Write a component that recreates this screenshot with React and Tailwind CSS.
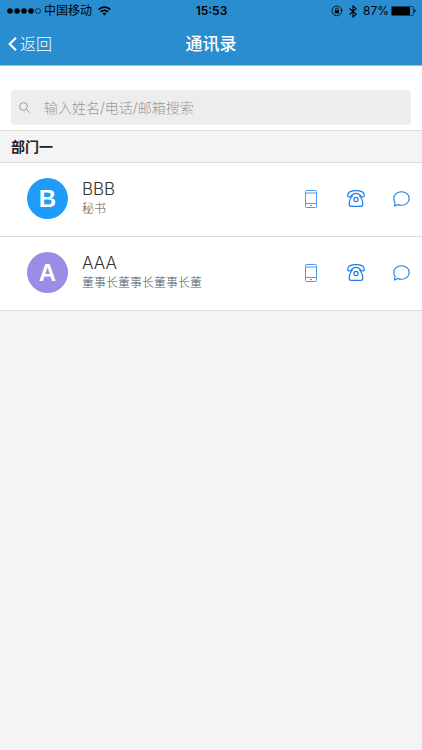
import { useState } from 'react';

const contactos = [
  { id: 1, nombre: 'BBB', inicial: 'B', cargo: '秘书', color: 'bg-[#1f9bfa]' },
  { id: 2, nombre: 'AAA', inicial: 'A', cargo: '董事长董事长董事长董', color: 'bg-[#9b8de5]' }
];

function StatusBar() {
  return (
    <div className="grid grid-cols-3 items-center h-[22px] pl-[7px] pr-[6px] text-black text-xs leading-4">
      <div className="flex items-center gap-[3px] whitespace-nowrap">
        <svg className="w-[34px] h-[6px]" viewBox="0 0 34 6">
          <circle cx="3" cy="3" r="2.8" />
          <circle cx="10" cy="3" r="2.8" />
          <circle cx="17" cy="3" r="2.8" />
          <circle cx="24" cy="3" r="2.8" />
          <circle cx="31" cy="3" r="2.5" fill="none" stroke="#000" strokeWidth="0.6" />
        </svg>
        <span>中国移动</span>
        <svg className="w-[13px] h-[10px] ml-[3px]" viewBox="0 0 13 10" fill="none" stroke="#000" strokeWidth="1.7">
          <path d="M0.7 3.6a8.2 8.2 0 0 1 11.6 0" />
          <path d="M2.8 5.9a5.2 5.2 0 0 1 7.4 0" />
          <path d="M6.5 9.6L4.5 7.5a2.9 2.9 0 0 1 4 0z" fill="#000" stroke="none" />
        </svg>
      </div>
      <span className="text-center font-semibold">15:53</span>
      <div className="flex items-center justify-end">
        <svg className="w-3 h-3 mr-[6px]" viewBox="0 0 12 12" fill="none" stroke="#000">
          <path d="M10.6 7.2A4.9 4.9 0 1 1 10.7 5" strokeWidth="0.8" />
          <path d="M9.3 5h2.7l-1.3 1.9z" fill="#000" stroke="none" />
          <rect x="3.8" y="5.2" width="4.2" height="3.2" fill="#000" stroke="none" />
          <path d="M4.6 5.4V4.3a1.3 1.3 0 0 1 2.6 0v1.1" strokeWidth="0.8" />
        </svg>
        <svg className="w-2 h-[13px] mr-[6px]" viewBox="0 0 8 13" fill="none" stroke="#000" strokeWidth="1.1">
          <path d="M0.6 3.5L7.2 9.3 4 12V1l3.2 2.7L0.6 9.5" />
        </svg>
        <span className="mr-[2px]">87%</span>
        <svg className="w-[25px] h-[10px]" viewBox="0 0 25 10">
          <rect x="0.4" y="0.4" width="22" height="9.2" rx="1.2" fill="none" stroke="#000" strokeWidth="0.6" />
          <rect x="1" y="1" width="18" height="8" rx="0.6" />
          <path d="M23.3 3.3c1.7.3 1.7 3.1 0 3.4z" />
        </svg>
      </div>
    </div>
  );
}

function PhoneIcon() {
  return (
    <svg className="w-3 h-[18px]" viewBox="0 0 12 18" fill="none" stroke="#3a8ee8" strokeWidth="0.9">
      <rect x="0.5" y="0.5" width="11" height="17" rx="1" />
      <path d="M0.5 3h11M0.5 13.5h11" />
      <path d="M5 15.500h2" />
    </svg>
  );
}

function TelephoneIcon() {
  return (
    <svg className="w-[18px] h-[17px]" viewBox="0 0 18 17" fill="none" stroke="#1a7de8" strokeWidth="1.200" strokeLinejoin="round">
      <path d="M0.700 5.200C0.900 2.200 4.600 0.700 9 0.700s8.100 1.500 8.300 4.500c.1 1.400-.9 2-2 1.700-1.200-.3-1.700-.8-2.300-1.700C12.200 3.900 11 3.300 9 3.300S5.800 3.900 5 5.200c-.6.900-1.100 1.400-2.300 1.700-1.100.3-2.100-.3-2-1.700z" />
      <path d="M5.700 5.700C3.600 7.800 2.300 11 2.200 14.300c0 1.300.6 2 1.800 2h10c1.200 0 1.800-.7 1.800-2C15.700 11 14.400 7.800 12.300 5.700" />
      <circle cx="9" cy="9.500" r="2.100" />
    </svg>
  );
}

function ChatIcon() {
  return (
    <svg className="w-[17px] h-4" viewBox="0 0 17 16" fill="none" stroke="#1a7de8" strokeWidth="1.1" strokeLinejoin="round">
      <path d="M2.100 11.500A6.900 6.900 0 0 1 .8 7.500C.8 3.700 4.200.7 8.500.7s7.700 3 7.700 6.800-3.400 6.800-7.700 6.800c-1.300 0-2.600-.2-3.700-.8L1.400 15z" />
    </svg>
  );
}

function ContactRow({ contacto }) {
  return (
    <li className="flex items-center h-[74px] pl-[27px] pr-3 pb-[2px] bg-white border-b border-[#dcdcdc]">
      <div className={`flex items-center justify-center w-[41px] h-[41px] rounded-full text-white text-2xl font-bold font-['Liberation_Sans',sans-serif] ${contacto.color}`}>
        {contacto.inicial}
      </div>
      <div className="flex-1 min-w-0 ml-[14px]">
        <p className="text-[17px] leading-5 font-light text-[#333]">{contacto.nombre}</p>
        <p className="text-xs leading-5 font-light text-[#555] truncate">{contacto.cargo}</p>
      </div>
      <div className="flex items-center gap-[27px]">
        <button type="button" aria-label="手机" className="flex justify-center w-[18px]"><PhoneIcon /></button>
        <button type="button" aria-label="电话" className="flex justify-center w-[18px]"><TelephoneIcon /></button>
        <button type="button" aria-label="消息" className="flex justify-center w-[18px]"><ChatIcon /></button>
      </div>
    </li>
  );
}

export default function App() {
  const [busqueda, setBusqueda] = useState('');

  const visibles = contactos.filter(c => c.nombre.includes(busqueda) || c.cargo.includes(busqueda));

  return (
    <div className="min-h-screen bg-[#f4f4f4] font-['Inter','Noto_Sans_CJK_SC',sans-serif]">
      <header className="bg-[#2a8dd0] border-b border-[#8cc4ee]">
        <StatusBar />
        <div className="grid grid-cols-3 items-center h-[43px] px-2 text-white">
          <button type="button" className="flex items-center gap-[3px] justify-self-start text-base leading-6 font-light">
            <svg className="w-[9px] h-[14px]" viewBox="0 0 9 14" fill="none" stroke="#fff" strokeWidth="2.2">
              <path d="M8 0.800L1.700 7L8 13.200" />
            </svg>
            返回
          </button>
          <h1 className="text-center text-[17px] leading-6 font-medium">通讯录</h1>
        </div>
      </header>

      {/* Buscador */}
      <div className="bg-white px-[11px] pt-6 pb-[5px]">
        <label className="flex items-center gap-[14px] h-[35px] pl-2 pr-3 rounded bg-[#ededed]">
          <svg className="w-[11px] h-[11px] shrink-0" viewBox="0 0 11 11" fill="none" stroke="#999" strokeWidth="1">
            <circle cx="4.500" cy="4.500" r="3.900" />
            <path d="M7.300 7.300L10.700 10.700" />
          </svg>
          <input
            type="text"
            aria-label="搜索"
            placeholder="输入姓名/电话/邮箱搜索"
            value={busqueda}
            onChange={(e) => setBusqueda(e.target.value)}
            className="flex-1 min-w-0 bg-transparent text-sm leading-5 font-light text-[#333] placeholder:text-[#999] outline-none"
          />
        </label>
      </div>

      {/* Lista por departamento */}
      <section>
        <h2 className="h-[33px] px-[11px] border-y border-[#dcdcdc] bg-[#f4f4f4] text-sm leading-[31px] font-bold text-[#222]">部门一</h2>
        <ul>
          {visibles.map(c => (
            <ContactRow key={c.id} contacto={c} />
          ))}
        </ul>
      </section>
    </div>
  );
}
